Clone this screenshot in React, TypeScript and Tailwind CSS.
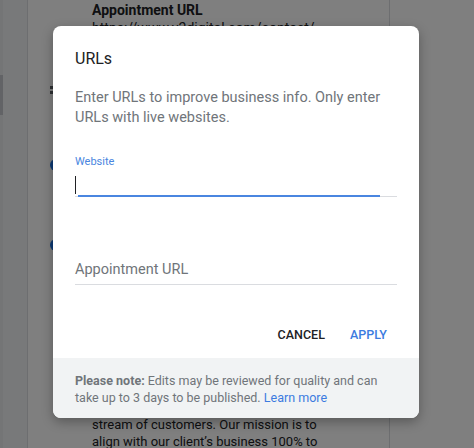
const App = () => {
  return (
    <div className="relative w-[474px] h-[448px] overflow-hidden bg-white font-['Roboto',_'Liberation_Sans',_sans-serif]">
      {/* page behind the dialog */}
      <div className="flex h-full">
        <div className="w-[27px] h-full bg-[#f1f3f4] border-l-[3px] border-[#e8eaed] flex flex-col">
          <div className="mt-[75px] h-[40px] w-[3px] -ml-[3px] bg-[#c4c7cc]" />
        </div>
        <div className="relative w-[363px] h-full border-l border-r border-[#dadce0] bg-white pl-[64px] flex flex-col">
          <div className="absolute left-[22px] top-[86px] grid grid-cols-2 gap-[2px]">
            <span className="w-[3px] h-[3px] bg-[#5f6368]" />
            <span className="w-[3px] h-[3px] bg-[#5f6368]" />
            <span className="w-[3px] h-[3px] bg-[#5f6368]" />
            <span className="w-[3px] h-[3px] bg-[#5f6368]" />
          </div>
          <div className="absolute left-[22px] top-[159px] w-[12px] h-[12px] rounded-full bg-[#1a73e8]" />
          <div className="absolute left-[22px] top-[239px] w-[12px] h-[12px] rounded-full bg-[#1a73e8]" />
          <p className="mt-[1px] text-[14px] font-bold leading-[18px] text-[#202124]">Appointment URL</p>
          <p className="text-[14px] leading-[18px] text-[#202124]">https://www.v2digital.com/contact/</p>
          <div className="flex-1" />
          <p className="text-[13px] leading-[17px] text-[#202124]">stream of customers. Our mission is to</p>
          <p className="text-[13px] leading-[17px] text-[#202124] -mb-[2px]">align with our client’s business 100% to</p>
        </div>
        <div className="flex-1 h-full bg-white" />
      </div>

      {/* scrim */}
      <div className="absolute inset-0 bg-black/50 pt-[26px] pl-[53px]">
        <div className="w-[366px] h-[392px] rounded-[8px] bg-white shadow-[0_4px_12px_rgba(0,0,0,0.3)] overflow-hidden flex flex-col">
          <div className="flex-1 px-[22px] pt-[23px]">
            <h2 className="text-[16px] leading-[20px] text-[#202124]">URLs</h2>
            <p className="mt-[19px] text-[14.5px] leading-[20px] text-[#70757a]">
              Enter URLs to improve business info. Only enter URLs with live websites.
            </p>

            <div className="mt-[27px]">
              <label className="block text-[11px] leading-[14px] text-[#4a86e0]">Website</label>
              <div className="relative mt-[6px] h-[22px] border-b border-[#dadce0]">
                <div className="absolute left-0 top-[1px] w-[1px] h-[18px] bg-[#202124]" />
                <div className="absolute left-[3px] right-[17px] -bottom-[1px] h-[2px] bg-[#4a86e0]" />
              </div>
            </div>

            <div className="mt-[60px] border-b border-[#dadce0] pb-[3px]">
              <span className="text-[14.5px] leading-[20px] text-[#70757a]">Appointment URL</span>
            </div>

            <div className="mt-[42px] flex justify-end gap-[25px] pr-[10px] text-[12.5px] font-medium leading-[16px]">
              <button className="text-[#202124]">CANCEL</button>
              <button className="text-[#3c7be0]">APPLY</button>
            </div>
          </div>

          <div className="h-[60px] bg-[#f1f3f4] px-[22px] pt-[14px] text-[12.5px] leading-[17px] text-[#70757a]">
            <span className="font-bold">Please note:</span> Edits may be reviewed for quality and can take up to 3 days to be published.{" "}
            <span className="text-[#3c7be0]">Learn more</span>
          </div>
        </div>
      </div>
    </div>
  );
};

export default App;
